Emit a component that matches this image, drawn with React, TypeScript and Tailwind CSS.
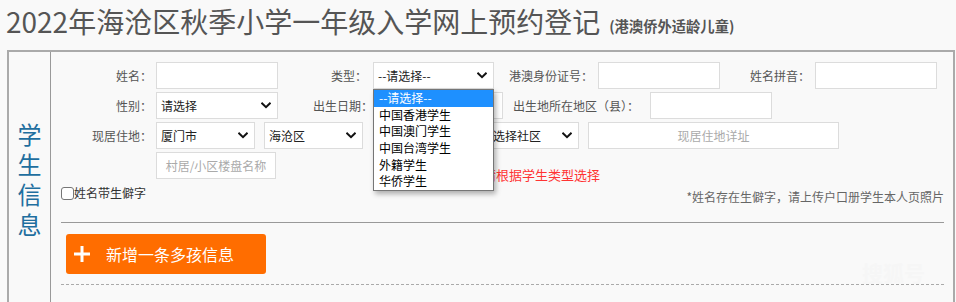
import React from "react";

const Chevron = () => (
  <svg width="10" height="7" viewBox="0 0 10 7" className="shrink-0">
    <polyline points="1.2,1.5 5,5.2 8.8,1.5" fill="none" stroke="#111" strokeWidth="2" strokeLinecap="square" />
  </svg>
);

const Sel = ({ w, text, ml }: { w: string; text: string; ml: string }) => (
  <div className={`${w} ${ml} h-[27px] bg-white border border-[#dcdcdc] flex items-center justify-between pl-[4px] pr-[6px] text-[12px] text-[#222] leading-[16px] box-border`}>
    <span className="whitespace-nowrap overflow-hidden">{text}</span>
    <Chevron />
  </div>
);

const Inp = ({ w, ml, ph }: { w: string; ml: string; ph?: string }) => (
  <div className={`${w} ${ml} h-[27px] bg-white border border-[#dcdcdc] flex items-center justify-center text-[12px] text-[#aaa] leading-[16px] box-border`}>
    {ph}
  </div>
);

const Label = ({ w, text }: { w: string; text: string }) => (
  <div className={`${w} shrink-0 text-right text-[12px] leading-[16px] text-[#555] whitespace-nowrap`}>{text}</div>
);

export default function App() {
  return (
    <div className="relative w-[956px] h-[302px] bg-[#f9f9f9] overflow-hidden font-['Noto_Sans_CJK_SC',sans-serif]">
      <div className="h-[50px] pl-[6px] pt-[1px] flex items-baseline whitespace-nowrap">
        <span className="text-[28px] leading-[40px] text-[#555]">2022年海沧区秋季小学一年级入学网上预约登记</span>
        <span className="ml-[9px] text-[14.3px] font-bold text-[#555] leading-[20px] relative top-[-1px]">(港澳侨外适龄儿童)</span>
      </div>
      <div className="ml-[7px] w-[948px] h-[252px] border-l-2 border-t-2 border-r-2 border-[#aaa] flex box-border">
        <div className="w-[42px] shrink-0 border-r border-[#999] flex flex-col items-center pt-[67px] text-[24px] leading-[30px] text-[#1f6f9f] box-border">
          <span>学</span>
          <span>生</span>
          <span>信</span>
          <span>息</span>
        </div>
        <div className="flex-1 pl-[9px] pr-[9px] pt-[10px]">
          {/* row 1 */}
          <div className="flex items-center h-[27px]">
            <Label w="w-[92px]" text="姓名：" />
            <Inp w="w-[122px]" ml="ml-[4px]" />
            <Label w="w-[89px]" text="类型：" />
            <Sel w="w-[121px]" ml="ml-[6px]" text="--请选择--" />
            <Label w="w-[99px]" text="港澳身份证号：" />
            <Inp w="w-[122px]" ml="ml-[5px]" />
            <Label w="w-[90px]" text="姓名拼音：" />
            <Inp w="w-[122px]" ml="ml-[5px]" />
          </div>
          {/* row 2 */}
          <div className="flex items-center h-[27px] mt-[3px]">
            <Label w="w-[92px]" text="性别：" />
            <Sel w="w-[122px]" ml="ml-[4px]" text="请选择" />
            <Label w="w-[95px]" text="出生日期：" />
            <Inp w="w-[130px]" ml="ml-[0px]" />
            <Label w="w-[136px]" text="出生地所在地区（县）：" />
            <Inp w="w-[122px]" ml="ml-[11px]" />
          </div>
          {/* row 3 */}
          <div className="flex items-center h-[27px] mt-[3px]">
            <Label w="w-[92px]" text="现居住地：" />
            <Sel w="w-[99px]" ml="ml-[4px]" text="厦门市" />
            <Sel w="w-[99px]" ml="ml-[9px]" text="海沧区" />
            <Sel w="w-[94px]" ml="ml-[10px]" text="请选择街道" />
            <Sel w="w-[103px]" ml="ml-[9px]" text="请选择社区" />
            <Inp w="w-[251px]" ml="ml-[9px]" ph="现居住地详址" />
          </div>
          {/* row 4 */}
          <div className="flex items-start h-[27px] mt-[3px]">
            <div className="w-[96px] shrink-0" />
            <Inp w="w-[120px]" ml="ml-[0px]" ph="村居/小区楼盘名称" />
            <span className="ml-[207px] mt-[14px] text-[13px] leading-[18px] text-[#ff3333] whitespace-nowrap">请根据学生类型选择</span>
          </div>
          {/* checkbox row */}
          <div className="flex items-start justify-between h-[43px] pt-[6px] box-border">
            <label className="flex items-center ml-[1px] text-[12px] leading-[16px] text-[#333]">
              <span className="w-[13px] h-[13px] border border-[#767676] rounded-[3px] bg-white box-border" />
              <span>姓名带生僻字</span>
            </label>
            <span className="mt-[4px] text-[12px] leading-[16px] text-[#666] whitespace-nowrap">*姓名存在生僻字，请上传户口册学生本人页照片</span>
          </div>
          <div className="border-t border-[#999] ml-[1px]" />
          <div className="mt-[11px] ml-[6px] w-[200px] h-[40px] bg-[#ff6d00] rounded-[3px] flex items-center text-white">
            <svg width="16" height="16" viewBox="0 0 16 16" className="ml-[8px]">
              <rect x="6.5" y="0" width="3" height="16" fill="#fff" />
              <rect x="0" y="6.5" width="16" height="3" fill="#fff" />
            </svg>
            <span className="ml-[16px] text-[16px] leading-[20px]">新增一条多孩信息</span>
          </div>
          <div className="mt-[10px] ml-[1px] border-t border-dashed border-[#aaa]" />
        </div>
      </div>
      {/* watermark */}
      <span className="absolute left-[862px] top-[258px] text-[21px] font-bold text-[#f6f6f6] leading-[28px]">搜狐号</span>
      {/* open dropdown */}
      <div className="absolute left-[373px] top-[89px] w-[121px] bg-white border border-[#767676] shadow-[2px_3px_5px_rgba(0,0,0,0.3)] text-[12px] box-border">
        {["--请选择--", "中国香港学生", "中国澳门学生", "中国台湾学生", "外籍学生", "华侨学生"].map((t, i) => (
          <div
            key={t}
            className={
              i === 0
                ? "h-[16.67px] leading-[16.67px] pl-[5px] bg-[#1e90ff] text-white"
                : "h-[16.67px] leading-[16.67px] pl-[5px] text-black"
            }
          >
            {t}
          </div>
        ))}
      </div>
    </div>
  );
}
